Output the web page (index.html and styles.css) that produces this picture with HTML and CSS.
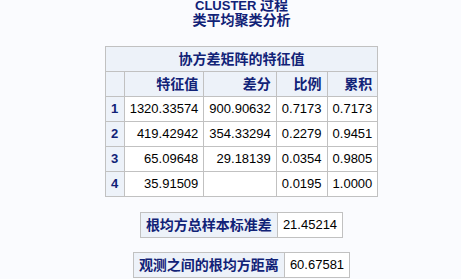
FILE: index.html
```html
<!DOCTYPE html>
<html>
<head>
<meta charset="utf-8">
<link rel="stylesheet" href="styles.css">
</head>
<body>
<div class="page">
  <div class="titles">
    <div class="title">CLUSTER <span class="cjk">过程</span></div>
    <div class="title cjk">类平均聚类分析</div>
  </div>

  <table class="grid eigen">
    <thead>
      <tr><th class="hdr caption" colspan="5">协方差矩阵的特征值</th></tr>
      <tr>
        <th class="hdr c1"></th>
        <th class="hdr c2 r">特征值</th>
        <th class="hdr c3 r">差分</th>
        <th class="hdr c4 r">比例</th>
        <th class="hdr c5 r">累积</th>
      </tr>
    </thead>
    <tbody>
      <tr><th class="hdr rowh">1</th><td>1320.33574</td><td>900.90632</td><td>0.7173</td><td>0.7173</td></tr>
      <tr><th class="hdr rowh">2</th><td>419.42942</td><td>354.33294</td><td>0.2279</td><td>0.9451</td></tr>
      <tr><th class="hdr rowh">3</th><td>65.09648</td><td>29.18139</td><td>0.0354</td><td>0.9805</td></tr>
      <tr><th class="hdr rowh">4</th><td>35.91509</td><td></td><td>0.0195</td><td>1.0000</td></tr>
    </tbody>
  </table>

  <table class="grid stat stat1">
    <tr><th class="hdr lbl">根均方总样本标准差</th><td class="val">21.45214</td></tr>
  </table>

  <table class="grid stat stat2">
    <tr><th class="hdr lbl">观测之间的根均方距离</th><td class="val">60.67581</td></tr>
  </table>
</div>
</body>
</html>
```

FILE: styles.css
```css
html, body {
  margin: 0;
  padding: 0;
  background: #FAFBFE;
}

.page {
  padding-left: 22px;
  display: flex;
  flex-direction: column;
  align-items: center;
  font-family: "Liberation Sans", "Noto Sans CJK SC", sans-serif;
}

.titles {
  margin-top: -2px;
  text-align: center;
  color: #112277;
  font-weight: bold;
  font-size: 13px;
  line-height: 14px;
}

.cjk {
  font-size: 14px;
}

.grid {
  border-collapse: separate;
  border-spacing: 0;
  border-left: 1px solid #C1C1C1;
  border-top: 1px solid #C1C1C1;
  font-size: 13px;
  line-height: 16px;
}

.grid th,
.grid td {
  box-sizing: border-box;
  border-right: 1px solid #C1C1C1;
  border-bottom: 1px solid #C1C1C1;
  padding: 4px 5px;
  height: 25px;
  white-space: nowrap;
}

.grid td {
  background: #FFFFFF;
  color: #000000;
  text-align: right;
}

.hdr {
  background: #EDF2F9;
  color: #112277;
  font-weight: bold;
  font-size: 14px;
}

.eigen {
  margin-top: 19px;
  table-layout: fixed;
}

.caption {
  text-align: center;
}

.r {
  text-align: right;
}

.c1 { width: 19px; }
.c2 { width: 78px; }
.c3 { width: 72px; }
.c4 { width: 49px; }
.c5 { width: 50px; }

.rowh {
  text-align: center;
  font-size: 13px;
  padding: 4px 0;
}

.stat {
  margin-top: 15px;
}

.stat2 {
  margin-top: 14px;
}

.lbl {
  text-align: left;
  padding: 4px 5px;
}

.val {
  padding: 4px 5px 4px 6px;
}
```
